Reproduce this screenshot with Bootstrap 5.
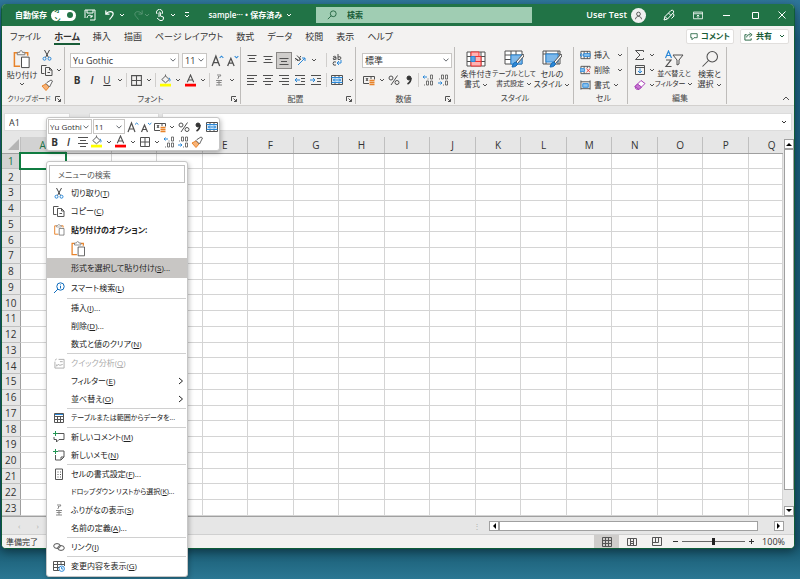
<!DOCTYPE html>
<html lang="ja">
<head>
<meta charset="utf-8">
<meta name="viewport" content="width=device-width, initial-scale=1">
<title>sample - Excel</title>
<link href="https://cdn.jsdelivr.net/npm/bootstrap@5.3.0/dist/css/bootstrap.min.css" rel="stylesheet">
<style>
:root{--xl:#217346;--ink:#333}
html,body{height:100%}
body{font-family:"Open Sans","Noto Sans CJK JP",sans-serif;font-size:8px;line-height:10px;color:var(--ink);font-feature-settings:"palt";background:linear-gradient(#2f769a 0,#1c6080 40px,#17586f 94%,#2b7793 100%);overflow:hidden;padding:4px 5px 30px 1px}
button,input,select{font:inherit;color:inherit;font-feature-settings:inherit}
svg{fill:none;stroke:currentColor;flex:none;display:block}
.app{height:100%;background:#e6e6e6;border:1px solid #0f5c38;border-top:0;border-radius:5px;overflow:hidden;box-shadow:0 3px 10px #0006}
.bare{border:0;background:none;padding:0;display:flex;align-items:center;justify-content:center;white-space:nowrap}
.titlebar{height:22px;background:var(--xl);color:#fff;font-weight:600}
.tb-left{width:314px;padding-left:13px}
.switch{width:25px;height:11px;border-radius:6px;background:#fff;color:var(--xl);font-size:7px;padding:0 3px}
.knob{width:6px;height:6px;border-radius:3px;background:var(--xl)}
.finder{width:216px;height:16px;background:#a0cdb3;color:#185c37;padding-left:11px;gap:10px}
.finder input{border:0;background:none;outline:0;min-width:0;padding:0}
.finder input::placeholder{color:#185c37;opacity:1}
.avatar{width:15px;height:15px;border-radius:8px;background:#f0f0f0;color:#333}
.user{font-size:9px}
.wb{width:29px;height:22px}
.wb:last-child{width:24px}
.tabs{height:20px;background:#f3f2f1;font-size:9px;gap:13px;padding:0 5px 0 8px}
.tabs a{color:#333;text-decoration:none;height:17px;line-height:18px;white-space:nowrap}
.tabs a.on{font-weight:700;border-bottom:2px solid #185c37}
.pills{gap:6px}
.pill{height:15px;background:#fff;border:1px solid #e1dfdd;border-radius:2px;color:#185c37;font-size:8px;font-weight:700;padding:0 3px;gap:3px}
.ribbon{height:60px;background:#f3f2f1;border-bottom:1px solid #d2d0ce}
.grp{border-right:1px solid #bebcba;margin:1px 0 1px;padding:4px 0 0 5px;display:flex;flex-direction:column}
.g-clip{width:63px;padding:0 0 0 1px}.g-font{width:176px}.g-align{width:115px;padding-left:4px}.g-num{width:99px;padding-left:6px}.g-style{width:119px;padding:0 0 0 2px}.g-cell{width:54px;padding:0 0 0 6px}.g-edit{width:99px;padding:0 0 0 6px}
.cap{height:11px;text-align:center;margin-top:auto;color:#444;white-space:nowrap}
.cap svg{margin-right:3px}
.r{display:flex;align-items:center;gap:1px;height:18px}
.r+.r{margin-top:2px}
.g-align .r{gap:2px}
.ribbon svg,.mini svg{color:#505050}
.ib{width:14px;height:15px}
.ib.on{background:#cfcdcb;outline:1px solid #8a8886}
.lt{font-size:10px;font-weight:600}
.ct{width:9px;height:15px}
.vd{width:1px;height:14px;background:#d0cecc;margin:0 1px}
.form-select.fs{height:15px;min-height:0;padding:0 8px 0 2px;font-size:9px;line-height:13px;border:1px solid #c8c6c4;border-radius:0;background-color:#fff;background-size:6px;background-position:right 2px center;color:#333}
.w-font{width:109px}
.form-select.w-size{width:25px;margin:0 2px}
.w-num{width:90px}
.big{flex-direction:column;width:38px;justify-content:flex-start;gap:1px;padding-top:3px;line-height:10px}
.dense{font-size:7px}
.lr{height:15px;gap:3px}
.fbar{padding:7px 2px 6px 2px;gap:3px}
.fbox{height:18px;background:#fff;border:1px solid #dcdcdc;padding:0 4px;font-size:9px}
.name-box{width:66px;margin-right:16px}
.fx{width:70px}
.sheet{min-height:0}
table.cells{table-layout:fixed;border-collapse:collapse;width:100%;height:100%;font-size:10px;line-height:12px;background:#fff}
.cells th{font-weight:400;text-align:center;background:#e6e6e6;padding:0;font-size:10px}
.cells thead th{border-right:1px solid #bfbfbf;border-bottom:1px solid #9f9f9f;height:16px}
.cells tbody th{border-right:1px solid #9f9f9f;border-bottom:1px solid #bfbfbf}
.cells td{border-right:1px solid #d4d4d4;border-bottom:1px solid #d4d4d4;padding:0}
.cells thead th:last-child{padding-left:12px;border-right:0}
.cells th.sel{background:#d2d2d2;color:var(--xl)}
.cells td.cur{outline:2px solid #107c41;outline-offset:-1px}
.c-row{width:18px}.c-last{width:34px}
.vbar{width:11px;padding:2px 0 0 1px}
.sb{background:#fff;border:1px solid #a0a0a0;width:10px;height:10px}
.thumb{background:#fff;border:1px solid #a0a0a0}
.hbar{height:18px;border-top:1px solid #a0a0a0;padding-right:10px;color:#b0b0b0}
.hscroll{width:295px}
.status{height:14px;background:#f3f2f1;border-top:1px solid #d0d0d0;padding-right:9px}
.pc{font-size:9px}
.vw{width:25px;height:13px;color:#555}
.vw.on{background:#cfcdcb}
.zoomer{appearance:none;width:63px;height:9px;background:linear-gradient(#666,#666) center/100% 1px no-repeat}
.zoomer::-webkit-slider-thumb{appearance:none;width:3px;height:7px;background:#222}
.float{position:absolute;background:#fff;border:1px solid #c6c6c6;border-radius:3px;box-shadow:1px 2px 5px #0004}
.mini{left:46px;top:117px;width:174px;padding:1px;z-index:3}
.mini .r{height:15px;gap:1px}
.mini .r+.r{margin-top:0}
.mini .ib{width:13px}
.mini .form-select.fs{font-size:8px;padding-left:1px;padding-right:7px}
.w-mf{width:44px}.w-ms{width:33px}
.ctx{left:46px;top:161px;width:142px;padding:3px 0 1px;z-index:2;color:#222}
.ctx input{display:block;width:136px;height:18px;margin:0 2px 1px;border:1px solid #c0c0c0;padding:0 8px;outline:0}
.ctx input::placeholder{color:#555;opacity:1}
.mi{width:100%;height:18px;justify-content:flex-start;color:inherit;padding-right:3px}
.mi .ic{width:24px;flex:none;display:flex;justify-content:center;color:#555}
.mi .ic.find{color:#0f6cbd}
.mi.hl{background:#c8c6c4}
.mi:disabled,.mi:disabled .ic{color:#aaa}
.mi.tall{height:20px}
.mi svg.go{margin-left:auto}
.ctx hr{margin:0 1px 0 20px;border-top:1px solid #d0d0d0;opacity:1}
</style>
<script src="https://cdn.jsdelivr.net/npm/bootstrap@5.3.0/dist/js/bootstrap.bundle.min.js"></script>
</head>
<body>
<svg class="d-none" xmlns="http://www.w3.org/2000/svg">
<symbol id="dn" viewBox="0 0 6 6"><path d="M1 2l2 2 2-2"/></symbol>
<symbol id="rt" viewBox="0 0 6 8"><path d="M1 1l3.500 3L1 7"/></symbol>
<symbol id="launch" viewBox="0 0 6 6"><path d="M.5 5V.5H5M2.500 2.500l3 3M5.500 3v2.500H3"/></symbol>
<symbol id="save" viewBox="0 0 12 12"><path d="M1 1h10v10H6M1 1v8M3 1v3h6V1M3 9c0-3 4-4 5-1M8 6v2H6"/></symbol>
<symbol id="undo" viewBox="0 0 12 12"><path d="M2 1v4h4M2 5c3-4 8-3 8 0 0 2-2 3-4 6" stroke-width="1.300"/></symbol>
<symbol id="redo" viewBox="0 0 12 12"><path d="M10 1v4H6M10 5C7 1 2 2 2 5c0 2 2 3 4 6"/></symbol>
<symbol id="touch" viewBox="0 0 12 12"><path d="M3 5a3 3 0 1 1 5 0M5 8V3.500q.7-1 1.400 0V7l3 1v2l-1 1.500H6L3 9"/></symbol>
<symbol id="mag" viewBox="0 0 12 12"><circle cx="7.500" cy="4.500" r="3.500"/><path d="M5 7L1 11"/></symbol>
<symbol id="user" viewBox="0 0 12 12"><circle cx="6" cy="4" r="2.500"/><path d="M2 11c0-5 8-5 8 0"/></symbol>
<symbol id="pen" viewBox="0 0 12 12"><path d="M1 11l1-3.500L8 1.500q2-1 2.500.5T10 4L4.500 10zM2 7.500L4.500 10M5.500 4L8 6.500M10.500 4.500L11 7 8.500 9.500"/></symbol>
<symbol id="disp" viewBox="0 0 12 12"><path d="M.5 2.500h11v8H.5zM.5 4.500h11M6 9.500V6M4.500 7.500L6 6l1.500 1.500"/></symbol>
<symbol id="cmt" viewBox="0 0 10 10"><path d="M1 1.500h8v5H5L2.500 9V6.500H1z"/></symbol>
<symbol id="share" viewBox="0 0 10 10"><path d="M3 3H1v6h7V7M3 6c0-3 2-3 4-3M6 1l3 2-3 2.500"/></symbol>
<symbol id="paste" viewBox="0 0 18 20"><path d="M7 17H1V3h3M12 3h3v3" stroke="#e8832a" stroke-width="1.600"/><path d="M4 2.500h2.500C7-.2 9-.2 9.500 2.500H12V5H4z" stroke="#777"/><path d="M8.500 7.500h8v11h-8z" fill="#fff" stroke="#444"/></symbol>
<symbol id="cut" viewBox="0 0 12 12"><path d="M3.500 1l4 7.500M8.500 1l-4 7.500" stroke="#444"/><circle cx="3.500" cy="9.700" r="1.500" stroke="#2b88d8"/><circle cx="8.500" cy="9.700" r="1.500" stroke="#2b88d8"/></symbol>
<symbol id="copy" viewBox="0 0 12 12"><path d="M3.500 9.500h-3v-8h5M4.500 3.500h4l2.500 2.500v5.500H4.500zM8.500 3.500V6H11M6.500 8.500h2.500"/></symbol>
<symbol id="brush" viewBox="0 0 12 12"><path d="M1 7l4-2 3 3-3 3.500z" fill="#f8b377" stroke="#e8832a"/><path d="M5 4.500l3.500 3.500 1-2L11.500 2 10 1 6 3.500z" fill="#fff" stroke="#666"/></symbol>
<symbol id="alr" viewBox="0 0 12 12"><path d="M1.500 2.500h9M3 5.500h6M1.500 8.500h9"/></symbol>
<symbol id="alL" viewBox="0 0 12 12"><path d="M1 1.500h10M1 4.500h7M1 7.500h10M1 10.500h7"/></symbol>
<symbol id="alC" viewBox="0 0 12 12"><path d="M1 1.500h10M3 4.500h6M1 7.500h10M3 10.500h6"/></symbol>
<symbol id="alR" viewBox="0 0 12 12"><path d="M1 1.500h10M4 4.500h7M1 7.500h10M4 10.500h7"/></symbol>
<symbol id="outd" viewBox="0 0 12 12"><path d="M1 1.500h10M7 4.500h4M7 7.500h4M1 10.500h10"/><path d="M6 6H1M3 4L1 6l2 2" stroke="#2b88d8"/></symbol>
<symbol id="ind" viewBox="0 0 12 12"><path d="M1 1.500h10M7 4.500h4M7 7.500h4M1 10.500h10"/><path d="M0 6h5M3 4l2 2-2 2" stroke="#2b88d8"/></symbol>
<symbol id="orient" viewBox="0 0 12 12"><path d="M1 4l3 3M3 1.500L7 6M1.500 6q1-2 2.500 0t2-1q-1-2 1-3" /><path d="M4 11l7-7M8 4h3v3" stroke="#2b88d8"/></symbol>
<symbol id="wrap" viewBox="0 0 12 12"><path d="M2 3q3-2 3 1v1.500M5 3.500q-3 0-3 1.500t3 0M7 0v5.500q3 .5 3-1.500T7 3M5 8q-3-1-3 1.500T5 11"/><path d="M10 6v3H6M8 7L6 9l2 2" stroke="#2b88d8"/></symbol>
<symbol id="merge" viewBox="0 0 12 12"><path d="M1 3.500h10v5H1z" fill="#cfe6f8" stroke="none"/><path d="M.5 1.500h11v9H.5zM4 1.500v2M8 1.500v2M4 8.500v2M8 8.500v2"/><path d="M.5 3.500h11M.5 8.500h11M2 6h8M4 4.500L2.500 6 4 7.500M8 4.500L9.500 6 8 7.500" stroke="#2b88d8"/></symbol>
<symbol id="grid" viewBox="0 0 12 12"><path d="M1.500 1.500h9v9h-9zM6 1.500v9M1.500 6h9"/></symbol>
<symbol id="fill" viewBox="0 0 12 14"><path d="M2 6l4-4 4 4-4 3.500zM6 2V.5"/><path d="M10 4q2 3 .5 4" stroke="#2b88d8"/><path d="M0 12h12" stroke="#ff0" stroke-width="3"/></symbol>
<symbol id="fcol" viewBox="0 0 12 14"><path d="M2.500 9L6 1l3.500 8M4 6.500h4" stroke-width="1.200"/><path d="M0 12h12" stroke="#f00" stroke-width="3"/></symbol>
<symbol id="ruby" viewBox="0 0 12 12"><path d="M4 1h4L6.500 3M5.500 2v2L4.500 5M3 6.500h6M6 6v5M3.500 8.500h5M3 11h6" stroke="#888"/></symbol>
<symbol id="agrow" viewBox="0 0 12 12"><path d="M1 11L4.500 2 8 11M2.500 8h4" stroke-width="1.200"/><path d="M8 3.500L9.700 2l1.700 1.500" stroke="#2b88d8"/></symbol>
<symbol id="ashr" viewBox="0 0 12 12"><path d="M1.500 11l3-7 3 7M2.700 8.500h3.500" stroke-width="1.200"/><path d="M8 2l1.700 1.500L11.400 2" stroke="#2b88d8"/></symbol>
<symbol id="cur" viewBox="0 0 12 12"><path d="M.5 2.500h11v3M6 9.500H.5v-7M3 4l2 3M5 4L3 7M7 4h2"/><path d="M6.500 6.500h5M6.500 8.500h5M6.500 10.500h5" stroke="#e8832a" stroke-width="1.300"/></symbol>
<symbol id="pct" viewBox="0 0 12 12"><circle cx="3" cy="4" r="2"/><circle cx="9" cy="8.500" r="2"/><path d="M9.500 1.500L3 11"/></symbol>
<symbol id="com" viewBox="0 0 12 12"><circle cx="6" cy="4" r="2" fill="#333" stroke="#333"/><path d="M8 4q0 4-3.500 6" stroke="#333" stroke-width="1.600"/></symbol>
<symbol id="dinc" viewBox="0 0 12 12"><path d="M5 3H1M2.500 1.500L1 3l1.500 1.500" stroke="#2b88d8"/><path d="M6 4.500v1M8.500 1h2v4h-2zM4.500 7h2v4h-2zM8.500 7h2v4h-2zM2.500 10.500v1" stroke-width=".8"/></symbol>
<symbol id="ddec" viewBox="0 0 12 12"><path d="M1 9h4M3.500 7.500L5 9l-1.500 1.500" stroke="#2b88d8"/><path d="M2.500 4.500v1M4.500 1h2v4h-2zM8.500 1h2v4h-2zM8.500 7h2v4h-2zM6.500 10.500v1" stroke-width=".8"/></symbol>
<symbol id="cond" viewBox="0 0 20 16"><path d="M1 1h18v14H1zM1 5.500h18M1 10.500h18M5 1v14M15 1v14" fill="#fff"/><path d="M5 1h8v4.500H5zM9 5.500h6v5H9zM5 10.500h10V15H5z" fill="#ffb3b3" stroke="#e33"/><path d="M5 5.500h4v5H5z" fill="#5aa5e6" stroke="#2b88d8"/></symbol>
<symbol id="tblf" viewBox="0 0 20 18"><path d="M1 1h17v13H1zM1 5h17M1 9.500h17M7 1v13M12 1v13" fill="#fff"/><path d="M7 5h11v9H7z" fill="#7db8ea" stroke="#2b88d8"/><path d="M19 4l-7 8 1.500 1.500L20 6z" fill="#fff"/><path d="M12 12q-3 0-4 5 5 0 5.500-3.500z" fill="#2b88d8" stroke="#1a6cb5"/></symbol>
<symbol id="cells" viewBox="0 0 20 18"><path d="M1 1h17v13H1zM1 4h17M4 1v13M16 1v13" fill="#fff"/><path d="M4 4h12v8H4z" fill="#7db8ea" stroke="#2b88d8"/><path d="M19 4l-7 8 1.500 1.500L20 6z" fill="#fff"/><path d="M12 12q-3 0-4 5 5 0 5.500-3.500z" fill="#2b88d8" stroke="#1a6cb5"/></symbol>
<symbol id="cins" viewBox="0 0 12 10"><path d="M1 1h10v8H1zM4.500 1v8M8 1v8"/><path d="M4 3.500h7v3H4z" fill="#8cc4f0" stroke="#2b88d8"/><path d="M4 5H0M2 3L0 5l2 2" stroke="#2b88d8"/></symbol>
<symbol id="cdel" viewBox="0 0 12 10"><path d="M1 3V1h10v2M1 7v2h10M4.500 1v2M4.500 7v2M8 1v2"/><path d="M0 3.500h5v3H0z" fill="#8cc4f0" stroke="#2b88d8"/><path d="M7 3.500l4 4M11 3.500l-4 4" stroke="#e33"/></symbol>
<symbol id="cfmt" viewBox="0 0 12 10"><path d="M1 0v10M11 0v10M1 1.500h10M1 9h10"/><path d="M3 3.500h6v4H3z" fill="#8cc4f0" stroke="#2b88d8"/></symbol>
<symbol id="sum" viewBox="0 0 12 12"><path d="M9.500 3V1.500h-8L6 6l-4.500 4.500h8V9"/></symbol>
<symbol id="filld" viewBox="0 0 12 12"><path d="M1.500 1.500h9v9h-9zM1.500 3.500h9"/><path d="M6 4.500V9M4 7l2 2 2-2" stroke="#2b88d8"/></symbol>
<symbol id="erase" viewBox="0 0 12 12"><path d="M1 7.500L7 1.500l4 3-6 6-3-.5z" fill="#fff" stroke="#a53cb5"/><path d="M1 7.500l2.500-2.500 4 3L5 10.500z" fill="#c877d2" stroke="#a53cb5"/></symbol>
<symbol id="sort" viewBox="0 0 20 18"><path d="M1.500 8L4.500 1l3 7M2.500 5.500h4" stroke="#2b88d8" stroke-width="1.200"/><path d="M2 10h5l-5 6.500h5.500" stroke-width="1.200"/><path d="M9 5h10l-4 5v4l-2 1v-5z"/></symbol>
<symbol id="smart" viewBox="0 0 12 12"><circle cx="7.500" cy="4.500" r="3.700"/><path d="M5 7L1 11M7.500 4v2.500M7.500 2.500v.8"/></symbol>
<symbol id="qa" viewBox="0 0 12 12"><path d="M1 4v7h10V1.500H5M2.500 9l2-2 2 1 3-1M6.500 4h3M1 2.500l2-1.500M3 9V7"/></symbol>
<symbol id="tbl" viewBox="0 0 12 12"><path d="M1.500 1.500h9v9h-9zM1.500 4.500h9M1.500 7.500h9M4.500 4v7M7.500 4v7"/><path d="M2 2.500h8" stroke="#2b88d8"/></symbol>
<symbol id="ncm" viewBox="0 0 12 12"><path d="M5 2.500h6v6H6L3.500 11V8.500H1V6"/><path d="M2.500 0v5M0 2.500h5" stroke="#219653"/></symbol>
<symbol id="nme" viewBox="0 0 12 12"><path d="M5 2h6v6l-3 3H2.500V6M11 8H8v3"/><path d="M2.500 0v5M0 2.500h5" stroke="#219653"/></symbol>
<symbol id="fmt" viewBox="0 0 12 12"><path d="M2.500 1h7v10.500h-7zM4.500 4h1M7 4h1M4.500 6.500h1M7 6.500h1M4.500 9h1M7 9h1"/></symbol>
<symbol id="lnk" viewBox="0 0 12 12"><ellipse cx="4" cy="5" rx="3.300" ry="2.400"/><ellipse cx="8" cy="7" rx="3.300" ry="2.400"/></symbol>
<symbol id="hist" viewBox="0 0 12 12"><path d="M6 10.500H.5v-9h11V6M1 4.500h10M1 7.500h5M4.500 1.500v9M8 1.500V5"/><circle cx="8.700" cy="8.700" r="2.700" stroke="#2b88d8" fill="#fff"/><path d="M8.700 7v2h1.500" stroke="#2b88d8"/></symbol>
<symbol id="vn" viewBox="0 0 12 10"><path d="M1.500.5h9v9h-9zM1.500 3.500h9M1.500 6.500h9M4.500.5v9M7.500.5v9"/></symbol>
<symbol id="vp" viewBox="0 0 12 10"><path d="M1.500 1.500h9v7h-9zM4.500 2v6M7.500 2v6M5 4.500h2M5 6.500h2"/></symbol>
<symbol id="vb" viewBox="0 0 12 10"><path d="M1.500.5h9v8h-9zM1.500 5.500h6v-5M4.500 1v4"/></symbol>
</svg>

<div class="app d-flex flex-column">
<header class="titlebar d-flex align-items-center flex-shrink-0">
 <div class="tb-left d-flex align-items-center flex-shrink-0">
  <label for="auto" class="me-1">自動保存</label>
  <label for="auto" class="switch d-flex align-items-center justify-content-between"><input id="auto" type="checkbox" class="visually-hidden" checked>オン<span class="knob"></span></label>
  <button class="bare ms-2" aria-label="保存"><svg width="12" height="12"><use href="#save"/></svg></button>
  <button class="bare ms-2" aria-label="元に戻す"><svg width="11" height="12"><use href="#undo"/></svg><svg class="ms-1" width="6" height="6"><use href="#dn"/></svg></button>
  <button class="bare ms-2 opacity-25" aria-label="やり直し"><svg width="11" height="12"><use href="#redo"/></svg><svg width="6" height="6"><use href="#dn"/></svg></button>
  <button class="bare ms-1" aria-label="タッチ"><svg width="12" height="12"><use href="#touch"/></svg><svg class="ms-1" width="6" height="6"><use href="#dn"/></svg></button>
  <button class="bare ms-2" aria-label="カスタマイズ"><svg width="6" height="6"><path d="M1 .5h4M1 3l2 2 2-2"/></svg></button>
  <button class="bare ms-auto me-4 gap-1">sample··· • 保存済み<svg width="6" height="6"><use href="#dn"/></svg></button>
 </div>
 <div class="finder d-flex align-items-center"><svg width="10" height="10"><use href="#mag"/></svg><input aria-label="検索" placeholder="検索"></div>
 <div class="d-flex align-items-center ms-auto flex-shrink-0">
  <span class="user me-1">User Test</span><span class="avatar d-flex align-items-center justify-content-center me-2"><svg width="9" height="9"><use href="#user"/></svg></span>
  <button class="bare wb" aria-label="ペン"><svg width="12" height="12"><use href="#pen"/></svg></button>
  <button class="bare wb" aria-label="リボンの表示"><svg width="10" height="10"><use href="#disp"/></svg></button>
  <button class="bare wb" aria-label="最小化"><svg width="7" height="8"><path d="M0 4.500h7"/></svg></button>
  <button class="bare wb" aria-label="最大化"><svg width="7" height="7"><path d="M.5.5h6v6h-6z"/></svg></button>
  <button class="bare wb" aria-label="閉じる"><svg width="8" height="8"><path d="M.5.5l7 7M7.500.5l-7 7"/></svg></button>
 </div>
</header>
<nav class="tabs d-flex align-items-center flex-shrink-0">
 <a href="#">ファイル</a><a href="#" class="on">ホーム</a><a href="#">挿入</a><a href="#">描画</a><a href="#">ページ レイアウト</a><a href="#">数式</a><a href="#">データ</a><a href="#">校閲</a><a href="#">表示</a><a href="#">ヘルプ</a>
 <div class="d-flex ms-auto pills"><button class="bare pill"><svg width="8" height="9"><use href="#cmt"/></svg>コメント</button><button class="bare pill"><svg width="9" height="9"><use href="#share"/></svg>共有<svg class="ms-1" width="6" height="6"><use href="#dn"/></svg></button></div>
</nav>
<div class="ribbon d-flex flex-shrink-0">
 <section class="grp g-clip">
  <div class="d-flex"><button class="bare big"><svg width="18" height="19"><use href="#paste"/></svg><span>貼り付け</span><svg width="6" height="6"><use href="#dn"/></svg></button>
   <div class="d-flex flex-column align-items-start"><button class="bare lr" aria-label="切り取り"><svg width="12" height="12"><use href="#cut"/></svg></button><button class="bare lr" aria-label="コピー"><svg width="12" height="12"><use href="#copy"/></svg><svg width="6" height="6"><use href="#dn"/></svg></button><button class="bare lr" aria-label="書式のコピー"><svg width="12" height="12"><use href="#brush"/></svg></button></div></div>
  <div class="cap d-flex align-items-center"><span class="flex-grow-1 dense">クリップボード</span><svg width="6" height="6"><use href="#launch"/></svg></div>
 </section>
 <section class="grp g-font">
  <div class="r"><select class="form-select fs w-font" aria-label="フォント"><option>Yu Gothic</option></select><select class="form-select fs w-size" aria-label="サイズ"><option>11</option></select><button class="bare ib" aria-label="拡大"><svg width="13" height="13"><use href="#agrow"/></svg></button><button class="bare ib" aria-label="縮小"><svg width="13" height="13"><use href="#ashr"/></svg></button></div>
  <div class="r"><button class="bare ib lt fw-bold">B</button><button class="bare ib lt fst-italic">I</button><button class="bare ib lt text-decoration-underline fw-normal">U</button><button class="bare ct" aria-label="下線"><svg width="6" height="6"><use href="#dn"/></svg></button><span class="vd"></span>
  <button class="bare ib" aria-label="罫線"><svg width="13" height="13"><use href="#grid"/></svg></button><button class="bare ct" aria-label="罫線一覧"><svg width="6" height="6"><use href="#dn"/></svg></button><span class="vd"></span>
  <button class="bare ib" aria-label="塗りつぶし"><svg width="11" height="13"><use href="#fill"/></svg></button><button class="bare ct" aria-label="塗りつぶし一覧"><svg width="6" height="6"><use href="#dn"/></svg></button><button class="bare ib" aria-label="文字色"><svg width="11" height="13"><use href="#fcol"/></svg></button><button class="bare ct" aria-label="文字色一覧"><svg width="6" height="6"><use href="#dn"/></svg></button><span class="vd"></span>
  <button class="bare ib" aria-label="ふりがな"><svg width="12" height="12"><use href="#ruby"/></svg></button><button class="bare ct" aria-label="ふりがな一覧"><svg width="6" height="6"><use href="#dn"/></svg></button></div>
  <div class="cap d-flex align-items-center"><span class="flex-grow-1">フォント</span><svg width="6" height="6"><use href="#launch"/></svg></div>
 </section>
 <section class="grp g-align">
  <div class="r"><button class="bare ib align-self-start" aria-label="上揃え"><svg width="12" height="12"><use href="#alr"/></svg></button><button class="bare ib" aria-label="中央"><svg width="12" height="12"><use href="#alr"/></svg></button><button class="bare ib on align-items-end" aria-label="下揃え"><svg width="12" height="12"><use href="#alr"/></svg></button><button class="bare ib" aria-label="方向"><svg width="12" height="12"><use href="#orient"/></svg></button><button class="bare ct" aria-label="方向一覧"><svg width="6" height="6"><use href="#dn"/></svg></button><span class="vd ms-auto"></span><button class="bare ib" aria-label="折り返し"><svg width="12" height="12"><use href="#wrap"/></svg></button><span class="ct"></span></div>
  <div class="r"><button class="bare ib" aria-label="左揃え"><svg width="12" height="12"><use href="#alL"/></svg></button><button class="bare ib" aria-label="中央揃え"><svg width="12" height="12"><use href="#alC"/></svg></button><button class="bare ib" aria-label="右揃え"><svg width="12" height="12"><use href="#alR"/></svg></button><button class="bare ib" aria-label="インデント減"><svg width="12" height="12"><use href="#outd"/></svg></button><button class="bare ib" aria-label="インデント増"><svg width="12" height="12"><use href="#ind"/></svg></button><span class="vd ms-auto"></span><button class="bare ib" aria-label="結合"><svg width="12" height="12"><use href="#merge"/></svg></button><button class="bare ct" aria-label="結合一覧"><svg width="6" height="6"><use href="#dn"/></svg></button></div>
  <div class="cap d-flex align-items-center"><span class="flex-grow-1">配置</span><svg width="6" height="6"><use href="#launch"/></svg></div>
 </section>
 <section class="grp g-num">
  <div class="r"><select class="form-select fs w-num" aria-label="表示形式"><option>標準</option></select></div>
  <div class="r"><button class="bare ib" aria-label="通貨"><svg width="12" height="12"><use href="#cur"/></svg></button><button class="bare ct" aria-label="通貨一覧"><svg width="6" height="6"><use href="#dn"/></svg></button><button class="bare ib" aria-label="パーセント"><svg width="12" height="12"><use href="#pct"/></svg></button><button class="bare ib" aria-label="桁区切り"><svg width="12" height="12"><use href="#com"/></svg></button><span class="vd"></span><button class="bare ib" aria-label="小数増"><svg width="12" height="12"><use href="#dinc"/></svg></button><button class="bare ib" aria-label="小数減"><svg width="12" height="12"><use href="#ddec"/></svg></button></div>
  <div class="cap d-flex align-items-center"><span class="flex-grow-1">数値</span><svg width="6" height="6"><use href="#launch"/></svg></div>
 </section>
 <section class="grp g-style">
  <div class="d-flex"><button class="bare big"><svg width="20" height="18"><use href="#cond"/></svg><span>条件付き<br>書式 <svg class="d-inline" width="6" height="6"><use href="#dn"/></svg></span></button><button class="bare big"><svg width="20" height="18"><use href="#tblf"/></svg><span class="dense">テーブルとして<br>書式設定 <svg class="d-inline" width="6" height="6"><use href="#dn"/></svg></span></button><button class="bare big"><svg width="20" height="18"><use href="#cells"/></svg><span>セルの<br>スタイル <svg class="d-inline" width="6" height="6"><use href="#dn"/></svg></span></button></div>
  <div class="cap">スタイル</div>
 </section>
 <section class="grp g-cell">
  <button class="bare lr justify-content-start"><svg width="11" height="10"><use href="#cins"/></svg>挿入<svg class="ms-1" width="6" height="6"><use href="#dn"/></svg></button><button class="bare lr justify-content-start"><svg width="11" height="10"><use href="#cdel"/></svg>削除<svg class="ms-1" width="6" height="6"><use href="#dn"/></svg></button><button class="bare lr justify-content-start"><svg width="11" height="10"><use href="#cfmt"/></svg>書式<svg width="6" height="6"><use href="#dn"/></svg></button>
  <div class="cap">セル</div>
 </section>
 <section class="grp g-edit">
  <div class="d-flex"><div><button class="bare lr" aria-label="合計"><svg width="12" height="12"><use href="#sum"/></svg><svg width="6" height="6"><use href="#dn"/></svg></button><button class="bare lr" aria-label="フィル"><svg width="12" height="12"><use href="#filld"/></svg><svg width="6" height="6"><use href="#dn"/></svg></button><button class="bare lr" aria-label="クリア"><svg width="12" height="12"><use href="#erase"/></svg><svg width="6" height="6"><use href="#dn"/></svg></button></div>
  <button class="bare big"><svg width="20" height="18"><use href="#sort"/></svg><span class="dense">並べ替えと<br>フィルター <svg class="d-inline" width="6" height="6"><use href="#dn"/></svg></span></button><button class="bare big"><svg width="20" height="18" viewBox="0 0 12 12"><use href="#mag" stroke-width=".7"/></svg><span>検索と<br>選択 <svg class="d-inline" width="6" height="6"><use href="#dn"/></svg></span></button></div>
  <div class="cap">編集</div>
 </section>
 <button class="bare ms-auto align-self-end me-1 mb-1" aria-label="折りたたむ"><svg width="8" height="6"><path d="M1 5l3-3 3 3"/></svg></button>
</div>
<div class="fbar d-flex flex-shrink-0">
 <input class="fbox name-box" aria-label="名前ボックス" value="A1"><div class="fbox fx"></div><div class="fbox flex-grow-1 d-flex align-items-center justify-content-end"><svg width="6" height="6"><use href="#dn"/></svg></div>
</div>
<div class="sheet d-flex flex-grow-1">
 <div class="flex-grow-1"><table class="cells"><colgroup><col class="c-row"></colgroup><thead></thead><tbody></tbody></table></div>
 <div class="vbar d-flex flex-column"><button class="bare sb" aria-label="上へ"><svg width="6" height="4"><path d="M0 4l3-3 3 3z" fill="#000" stroke="none"/></svg></button><div class="thumb flex-grow-1 mb-3"></div><button class="bare sb" aria-label="下へ"><svg width="6" height="4"><path d="M0 0l3 3 3-3z" fill="#000" stroke="none"/></svg></button></div>
</div>
<div class="hbar d-flex align-items-center flex-shrink-0">
 <span class="ms-3">‹</span><span class="ms-3">›</span>
 <span class="ms-auto me-2">⋮</span>
 <div class="hscroll d-flex"><button class="bare sb" aria-label="左へ"><svg width="4" height="6"><path d="M4 0L1 3l3 3z" fill="#000" stroke="none"/></svg></button><div class="thumb flex-grow-1 me-3"></div><button class="bare sb" aria-label="右へ"><svg width="4" height="6"><path d="M0 0l3 3-3 3z" fill="#000" stroke="none"/></svg></button></div>
</div>
<footer class="status d-flex align-items-center flex-shrink-0">
 <span class="ms-1">準備完了</span>
 <button class="bare vw on ms-auto" aria-label="標準"><svg width="12" height="10"><use href="#vn"/></svg></button><button class="bare vw" aria-label="ページ レイアウト"><svg width="12" height="10"><use href="#vp"/></svg></button><button class="bare vw" aria-label="改ページ"><svg width="12" height="10"><use href="#vb"/></svg></button>
 <button class="bare mx-1" aria-label="縮小"><svg width="5" height="5"><path d="M0 2.500h5"/></svg></button><input class="zoomer" type="range" aria-label="ズーム"><button class="bare ms-1 me-2" aria-label="拡大"><svg width="5" height="5"><path d="M0 2.500h5M2.500 0v5"/></svg></button><span class="pc">100%</span>
</footer>
</div>

<div class="float mini" role="toolbar">
 <div class="r"><select class="form-select fs w-mf" aria-label="フォント"><option>Yu Gothi</option></select><select class="form-select fs w-ms" aria-label="サイズ"><option>11</option></select><button class="bare ib" aria-label="拡大"><svg width="12" height="12"><use href="#agrow"/></svg></button><button class="bare ib" aria-label="縮小"><svg width="12" height="12"><use href="#ashr"/></svg></button><button class="bare ib" aria-label="通貨"><svg width="12" height="12"><use href="#cur"/></svg></button><button class="bare ct" aria-label="通貨一覧"><svg width="6" height="6"><use href="#dn"/></svg></button><button class="bare ib" aria-label="パーセント"><svg width="12" height="12"><use href="#pct"/></svg></button><button class="bare ib" aria-label="桁区切り"><svg width="12" height="12"><use href="#com"/></svg></button><button class="bare ib" aria-label="結合"><svg width="12" height="12"><use href="#merge"/></svg></button></div>
 <div class="r"><button class="bare ib lt fw-bold">B</button><button class="bare ib lt fst-italic">I</button><button class="bare ib" aria-label="中央揃え"><svg width="12" height="12"><use href="#alC"/></svg></button><button class="bare ib" aria-label="塗りつぶし"><svg width="11" height="13"><use href="#fill"/></svg></button><button class="bare ct" aria-label="塗りつぶし一覧"><svg width="6" height="6"><use href="#dn"/></svg></button><button class="bare ib" aria-label="文字色"><svg width="11" height="13"><use href="#fcol"/></svg></button><button class="bare ct" aria-label="文字色一覧"><svg width="6" height="6"><use href="#dn"/></svg></button><button class="bare ib" aria-label="罫線"><svg width="12" height="12"><use href="#grid"/></svg></button><button class="bare ct" aria-label="罫線一覧"><svg width="6" height="6"><use href="#dn"/></svg></button><button class="bare ib" aria-label="小数増"><svg width="12" height="12"><use href="#dinc"/></svg></button><button class="bare ib" aria-label="小数減"><svg width="12" height="12"><use href="#ddec"/></svg></button><button class="bare ib" aria-label="書式のコピー"><svg width="12" height="12"><use href="#brush"/></svg></button></div>
</div>

<div class="float ctx">
 <input aria-label="メニューの検索" placeholder="メニューの検索">
 <button class="bare mi"><span class="ic"><svg width="12" height="12"><use href="#cut"/></svg></span>切り取り(<u>T</u>)</button>
 <button class="bare mi"><span class="ic"><svg width="12" height="12"><use href="#copy"/></svg></span>コピー(<u>C</u>)</button>
 <div class="bare mi tall fw-bold"><span class="ic"><svg width="11" height="12"><use href="#paste"/></svg></span>貼り付けのオプション:</div>
 <button class="bare mi" aria-label="貼り付け"><span class="ic"></span><svg width="15" height="16"><use href="#paste"/></svg></button>
 <button class="bare mi tall hl"><span class="ic"></span>形式を選択して貼り付け(<u>S</u>)...</button>
 <button class="bare mi tall"><span class="ic find"><svg width="12" height="12"><use href="#smart"/></svg></span>スマート検索(<u>L</u>)</button>
 <hr>
 <button class="bare mi"><span class="ic"></span>挿入(<u>I</u>)...</button>
 <button class="bare mi"><span class="ic"></span>削除(<u>D</u>)...</button>
 <button class="bare mi"><span class="ic"></span>数式と値のクリア(<u>N</u>)</button>
 <hr>
 <button class="bare mi" disabled><span class="ic"><svg width="11" height="11"><use href="#qa"/></svg></span>クイック分析(<u>Q</u>)</button>
 <button class="bare mi"><span class="ic"></span>フィルター(<u>E</u>)<svg class="go" width="6" height="8"><use href="#rt"/></svg></button>
 <button class="bare mi"><span class="ic"></span>並べ替え(<u>O</u>)<svg class="go" width="6" height="8"><use href="#rt"/></svg></button>
 <hr>
 <button class="bare mi dense"><span class="ic"><svg width="12" height="12"><use href="#tbl"/></svg></span>テーブルまたは範囲からデータを...</button>
 <hr>
 <button class="bare mi"><span class="ic"><svg width="12" height="12"><use href="#ncm"/></svg></span>新しいコメント(<u>M</u>)</button>
 <button class="bare mi"><span class="ic"><svg width="12" height="12"><use href="#nme"/></svg></span>新しいメモ(<u>N</u>)</button>
 <hr>
 <button class="bare mi"><span class="ic"><svg width="12" height="12"><use href="#fmt"/></svg></span>セルの書式設定(<u>F</u>)...</button>
 <button class="bare mi dense"><span class="ic"></span>ドロップダウン リストから選択(<u>K</u>)...</button>
 <button class="bare mi"><span class="ic"><svg width="12" height="12"><use href="#ruby"/></svg></span>ふりがなの表示(<u>S</u>)</button>
 <button class="bare mi"><span class="ic"></span>名前の定義(<u>A</u>)...</button>
 <hr>
 <button class="bare mi"><span class="ic"><svg width="12" height="12"><use href="#lnk"/></svg></span>リンク(<u>I</u>)</button>
 <hr>
 <button class="bare mi"><span class="ic"><svg width="12" height="12"><use href="#hist"/></svg></span>変更内容を表示(<u>G</u>)</button>
</div>
<script>
const names = [..."ABCDEFGHIJKLMNOPQ"];
const cg = document.querySelector(".cells colgroup");
names.forEach((n, i) => { const c = document.createElement("col"); if (i === 16) c.className = "c-last"; cg.append(c); });
document.querySelector(".cells thead").innerHTML = '<tr><th><svg class="ms-auto" width="12" height="12"><path d="M11 0v11H0z" fill="#b4b4b4" stroke="none"/></svg></th>' + names.map((n, i) => `<th${i ? "" : ' class="sel"'}>${n}</th>`).join("") + "</tr>";
document.querySelector(".cells tbody").innerHTML = Array.from({length: 23}, (_, r) => `<tr><th${r ? "" : ' class="sel"'}>${r + 1}</th>` + names.map((n, i) => `<td${r || i ? "" : ' class="cur"'}></td>`).join("") + "</tr>").join("");
</script>
</body>
</html>
